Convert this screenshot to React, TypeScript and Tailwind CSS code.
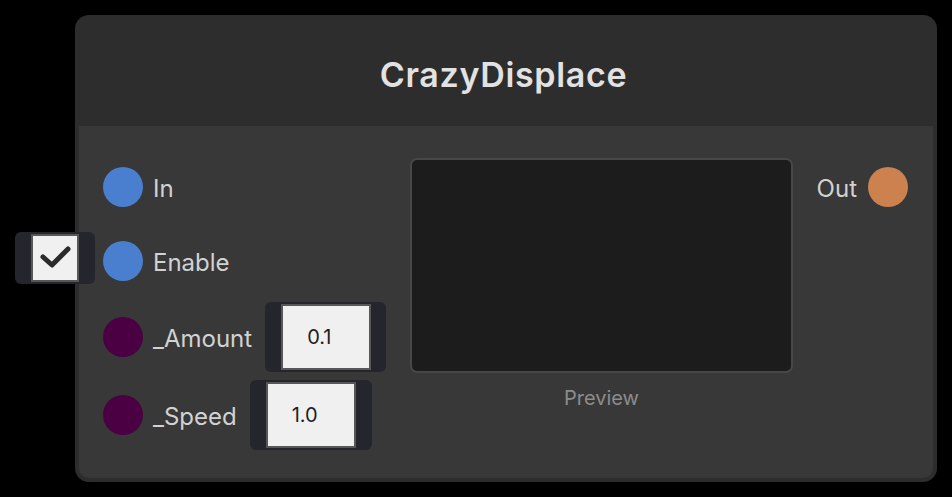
import React from "react";

const font = { fontFamily: "Inter, 'Noto Sans', sans-serif" };

function Socket({ color }: { color: string }) {
  return <div className={`w-10 h-10 rounded-full shrink-0 ${color}`} />;
}

function NumberField({ value }: { value: string }) {
  return (
    <div className="ml-[3px] w-[122px] h-[70px] bg-[#25252d] rounded-[6px] pl-[16px] pt-[2px]">
      <div className="w-[90px] h-[66px] bg-[#f0f0f0] border-2 border-[#575757] flex items-center pl-[24px] text-[20px] text-[#1e1e1e]">
        {value}
      </div>
    </div>
  );
}

function Checkbox() {
  return (
    <div className="absolute left-[-88px] top-[-29px] w-[80px] h-[52px] bg-[#25252d] rounded-[6px] pl-[16px] pt-[2px]">
      <div className="w-[48px] h-[48px] bg-[#f0f0f0] border-2 border-[#575757] flex items-center justify-center">
        <svg width="34" height="26" viewBox="0 0 34 26">
          <path d="M6 14 L15 22 L31 6" fill="none" stroke="#2b2b2b" strokeWidth="5" strokeLinecap="round" strokeLinejoin="round" transform="translate(-1 -2)" />
        </svg>
      </div>
    </div>
  );
}

export default function App() {
  return (
    <div className="w-[952px] h-[497px] bg-black pl-[75px] pt-[15px]" style={font}>
      <div className="w-[862px] h-[467px] bg-[#2d2d2d] rounded-[14px] px-[4px] pb-[4px] flex flex-col">
        <div className="h-[111px] flex items-center justify-center pt-[8px] pr-[5px] text-[34px] font-semibold tracking-[0.02em] text-[#e2e2e2]">
          CrazyDisplace
        </div>
        <div className="flex-1 bg-[#383838] rounded-b-[10px] flex pl-6 pr-[25px] pt-6 text-[24px] text-[#d2d2d2]">
          <div className="w-[283px] flex flex-col">
            <div className="h-[74px] flex items-center gap-[10px]">
              <Socket color="bg-[#4a7fcf]" />
              <span className="pt-[3px]">In</span>
            </div>
            <div className="h-[74px] flex items-center gap-[10px] relative">
              <Socket color="bg-[#4a7fcf]" />
              <span className="pt-[3px]">Enable</span>
              <div className="absolute left-0 top-1/2">
                <Checkbox />
              </div>
            </div>
            <div className="h-[78px] flex items-center gap-[10px]">
              <Socket color="bg-[#4a0042]" />
              <span className="pt-[3px]">_Amount</span>
              <NumberField value="0.1" />
            </div>
            <div className="h-[78px] flex items-center gap-[10px]">
              <Socket color="bg-[#4a0042]" />
              <span className="pt-[3px]">_Speed</span>
              <NumberField value="1.0" />
            </div>
          </div>
          <div className="ml-6 w-[383px] pt-2 flex flex-col items-center">
            <div className="w-[383px] h-[215px] bg-[#1c1c1c] border-2 border-[#474747] rounded-[7px]" />
            <div className="mt-[10px] text-[20px] text-[#8c8c8c]">Preview</div>
          </div>
          <div className="ml-auto h-[74px] flex items-center gap-[11px]">
            <span className="pt-[3px]">Out</span>
            <Socket color="bg-[#cc814f]" />
          </div>
        </div>
      </div>
    </div>
  );
}
